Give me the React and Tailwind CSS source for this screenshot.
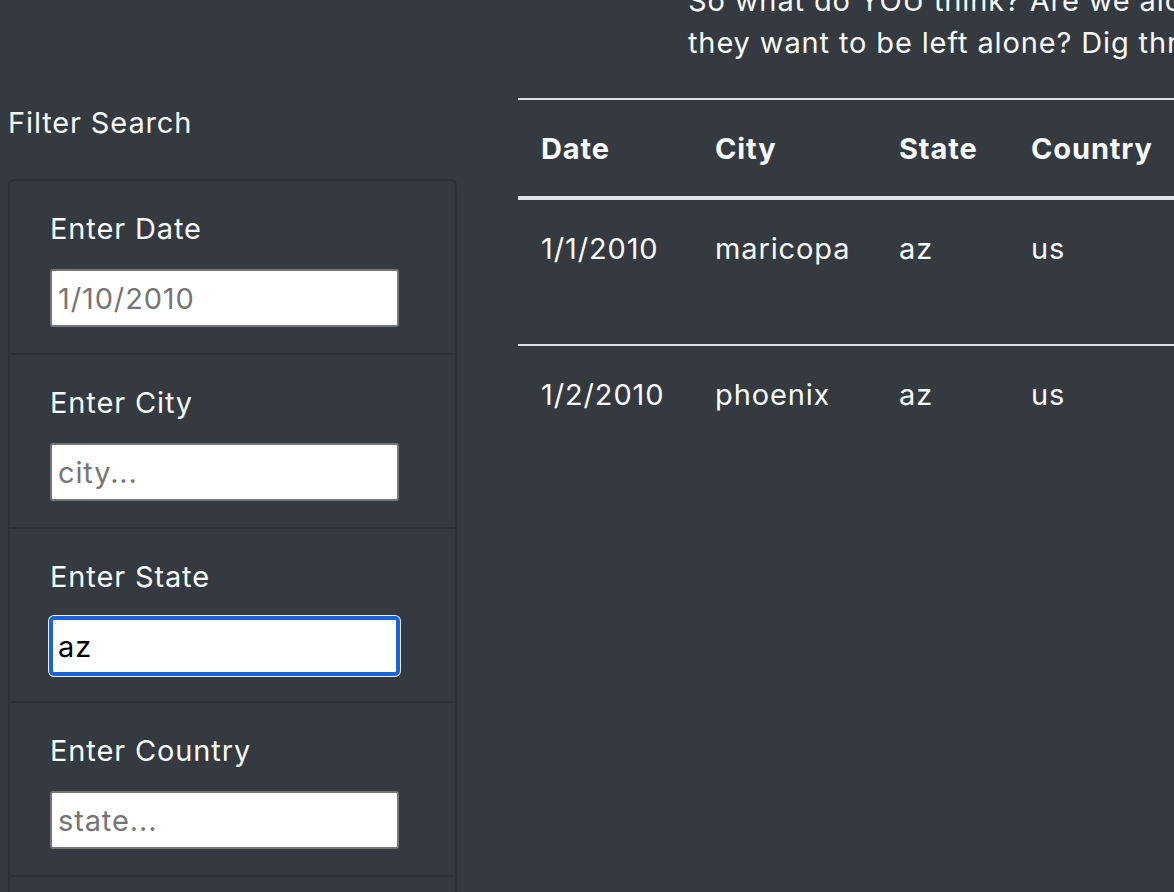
import React from 'react';

const fields = [
    { label: 'Enter Date', placeholder: '1/10/2010', value: '' },
    { label: 'Enter City', placeholder: 'city...', value: '' },
    { label: 'Enter State', placeholder: 'state...', value: 'az', focused: true },
    { label: 'Enter Country', placeholder: 'state...', value: '' },
];

const rows = [
    { date: '1/1/2010', city: 'maricopa', state: 'az', country: 'us', shape: 'light' },
    { date: '1/2/2010', city: 'phoenix', state: 'az', country: 'us', shape: 'circle' },
];

const App = () => {
    return (
        <div
            className="h-[892px] w-full overflow-hidden bg-[#343a40] text-[#f8f9fa] text-[29px] leading-[42px] tracking-[0.03em]"
            style={{ fontFamily: 'Inter, "Noto Sans", sans-serif' }}
        >
            <div className="mt-[-20px] mb-[34px] ml-[688px] whitespace-nowrap">
                <p>So what do YOU think? Are we alone in the universe, or are there aliens out there and</p>
                <p>they want to be left alone? Dig through the data and decide for yourself.</p>
            </div>

            <div className="flex">
                <div className="ml-[8px] w-[449px] shrink-0">
                    <h5 className="pt-[4px] mb-[35px]">Filter Search</h5>
                    <ul className="border-2 border-[#2c3137] rounded-[6px]">
                        {fields.map((f) => (
                            <li key={f.label} className="border-b-2 border-[#2c3137] pt-[27px] pb-[26px] pl-[40px]">
                                <label className="block mb-[19px]">{f.label}</label>
                                {f.focused ? (
                                    <input
                                        readOnly
                                        value={f.value}
                                        placeholder={f.placeholder}
                                        className="block w-[349px] h-[58px] px-[5px] bg-white text-black border-[3px] border-[#1a64d4] rounded-[4px] shadow-[0_0_0_1px_#1a64d4,0_0_0_2px_#e9ecef] outline-none"
                                    />
                                ) : (
                                    <input
                                        readOnly
                                        value={f.value}
                                        placeholder={f.placeholder}
                                        className="block w-[349px] h-[58px] px-[6px] bg-white text-black border-2 border-[#767676] rounded-[3px] placeholder:text-[#757575] outline-none"
                                    />
                                )}
                            </li>
                        ))}
                        <li className="h-[60px]"></li>
                    </ul>
                </div>

                <div className="ml-[61px] shrink-0">
                    <table className="table-fixed w-[1100px] text-left border-t-2 border-[#dee2e6]">
                        <colgroup>
                            <col className="w-[174px]" />
                            <col className="w-[184px]" />
                            <col className="w-[132px]" />
                            <col className="w-[200px]" />
                            <col />
                        </colgroup>
                        <thead>
                            <tr className="border-b-4 border-[#dee2e6]">
                                <th className="px-[23px] pt-[28px] pb-[26px] font-bold">Date</th>
                                <th className="px-[23px] pt-[28px] pb-[26px] font-bold">City</th>
                                <th className="px-[23px] pt-[28px] pb-[26px] font-bold">State</th>
                                <th className="px-[23px] pt-[28px] pb-[26px] font-bold">Country</th>
                                <th className="px-[23px] pt-[28px] pb-[26px] font-bold">Shape</th>
                            </tr>
                        </thead>
                        <tbody>
                            {rows.map((r, i) => (
                                <tr key={r.date} className={`align-top ${i > 0 ? 'border-t-2 border-[#dee2e6]' : ''}`}>
                                    <td className="px-[23px] pt-[28px] h-[147px]">{r.date}</td>
                                    <td className="px-[23px] pt-[28px]">{r.city}</td>
                                    <td className="px-[23px] pt-[28px]">{r.state}</td>
                                    <td className="px-[23px] pt-[28px]">{r.country}</td>
                                    <td className="px-[23px] pt-[28px]">{r.shape}</td>
                                </tr>
                            ))}
                        </tbody>
                    </table>
                </div>
            </div>
        </div>
    );
};

export default App;
